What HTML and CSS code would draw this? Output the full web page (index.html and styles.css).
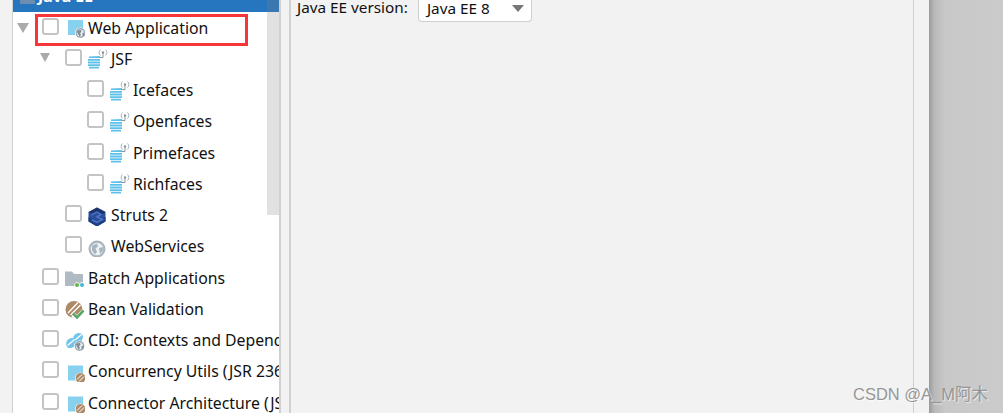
FILE: index.html
```html
<!DOCTYPE html>
<html lang="en">
<head>
  <meta charset="UTF-8" />
  <title>New Project – Java EE</title>
  <link rel="stylesheet" href="styles.css">
</head>
<body>

  <svg class="defs" width="0" height="0">
    <symbol id="i-globe" viewBox="0 0 10 10">
      <circle cx="5" cy="5" r="5" fill="#9aa7b0"/>
      <circle cx="5" cy="5" r="3.6" fill="#e8edf0"/>
      <path d="M2 2.500 5.500 2 6 4 4.500 5 5.500 7 4 8.500 2.500 6 1.500 4ZM7 5l2-.5-.5 3-1.500 1Z" fill="#7f8d97"/>
    </symbol>
    <symbol id="i-bean" viewBox="0 0 10 10">
      <circle cx="5" cy="5" r="5" fill="#ad8a68"/>
      <path d="M1.500 6.500 6.500 1.500M3.500 8.500 8.500 3.500" stroke="#fff" stroke-width="1"/>
    </symbol>
    <symbol id="i-web" viewBox="0 0 20 20">
      <rect x="3" y="2" width="15" height="15" fill="#87d0ee"/>
      <circle cx="15.500" cy="15" r="5.500" fill="#fff"/>
      <use href="#i-globe" x="10.500" y="10" width="10" height="10"/>
    </symbol>
    <symbol id="i-conc" viewBox="0 0 20 20">
      <rect x="3" y="3.500" width="15" height="15" fill="#87d0ee"/>
      <circle cx="15.500" cy="16" r="5.500" fill="#fff"/>
      <use href="#i-bean" x="10.500" y="11" width="10" height="10"/>
    </symbol>
    <symbol id="i-jsf" viewBox="0 0 20 20">
      <path d="M1 7.500 12 7v2H1ZM0 10h12v1.800H0ZM0 12.600h12v1.800H0ZM0 15.200h12V17H0ZM1 17.800h10V19.500H1Z" fill="#5ec0ea"/>
      <path d="M11.500 8.500h3.500V4" fill="none" stroke="#8a959c" stroke-width="1"/>
      <circle cx="15" cy="3.500" r="1.200" fill="#8a959c"/>
      <path d="M12.500 6.500a4 4 0 0 1 0-6M17.500 6.500a4 4 0 0 0 0-6" fill="none" stroke="#a9b3ba" stroke-width="1"/>
    </symbol>
    <symbol id="i-struts" viewBox="0 0 20 20">
      <path d="M9 1.500 17.500 6V15.500L9 20.500.5 15.500V6Z" fill="#2b4f9c"/>
      <path d="M9 1.500 17.500 6 12.500 9 9 7 5.500 9 .5 6Z" fill="#1c3570"/>
      <path d="M.5 11 9 16 17.500 11V15.500L9 20.500.5 15.500Z" fill="#1f3f85"/>
      <path d="M3.500 9 9 6 13 8.500 9 11 14.500 13.500 9 16.500 4 14" fill="none" stroke="#4d74c4" stroke-width="1.500"/>
    </symbol>
    <symbol id="i-ws" viewBox="0 0 20 20">
      <circle cx="9" cy="12" r="8.500" fill="#a9b5bd"/>
      <circle cx="9" cy="12" r="6.300" fill="#edf1f3"/>
      <path d="M4 8.500 9 6.500l1 3-2.500 2 1.500 3.500-2 2.500-3-4ZM11 11l4-1 .5 3-3.500 4Z" fill="#a9b5bd"/>
    </symbol>
    <symbol id="i-batch" viewBox="0 0 20 20">
      <path d="M0 3.500h7l2 2.500h9v12H0Z" fill="#afbac2"/>
      <circle cx="12" cy="17" r="2.700" fill="#fff"/>
      <circle cx="17" cy="17" r="2.700" fill="#fff"/>
      <circle cx="12" cy="17" r="2" fill="#62b543"/>
      <circle cx="17" cy="17" r="2" fill="#40b6e0"/>
    </symbol>
    <symbol id="i-valid" viewBox="0 0 20 20">
      <circle cx="9" cy="10.500" r="8.500" fill="#ad8a68"/>
      <path d="M3 14 13 3.500M5.500 16 15.500 6" stroke="#fff" stroke-width="1.400"/>
      <path d="M8 15.500 12 19.500 19 12" fill="none" stroke="#fff" stroke-width="5"/>
      <path d="M8 14.500 12 18.500 18.500 11.500" fill="none" stroke="#59a869" stroke-width="2.600"/>
    </symbol>
    <symbol id="i-cdi" viewBox="0 0 20 20">
      <ellipse cx="13" cy="7" rx="4.500" ry="5.500" transform="rotate(40 13 7)" fill="#72c5ea"/>
      <path d="M9.500 9.500 16.500 3.500" stroke="#fff" stroke-width="1.200"/>
      <ellipse cx="6" cy="12" rx="4.500" ry="5.500" transform="rotate(40 6 12)" fill="#72c5ea"/>
      <path d="M2.500 14.500 9.500 8.500" stroke="#fff" stroke-width="1.200"/>
      <circle cx="14.500" cy="15" r="5.500" fill="#fff"/>
      <use href="#i-globe" x="9.500" y="10" width="10" height="10"/>
    </symbol>
  </svg>

  <div class="window">
    <div class="gutter"></div>

    <div class="tree-panel">
      <div class="tree-head"><span class="tree-head-icon"></span><span>Java EE</span></div>
      <div class="thumb"></div>
      <div class="highlight"></div>

      <div class="row level-0"><span class="arrow"></span><span class="check"></span><svg class="icon"><use href="#i-web"/></svg><span>Web Application</span></div>
      <div class="row level-1"><span class="arrow small"></span><span class="check"></span><svg class="icon"><use href="#i-jsf"/></svg><span>JSF</span></div>
      <div class="row level-2"><span class="arrow none"></span><span class="check"></span><svg class="icon"><use href="#i-jsf"/></svg><span>Icefaces</span></div>
      <div class="row level-2"><span class="arrow none"></span><span class="check"></span><svg class="icon"><use href="#i-jsf"/></svg><span>Openfaces</span></div>
      <div class="row level-2"><span class="arrow none"></span><span class="check"></span><svg class="icon"><use href="#i-jsf"/></svg><span>Primefaces</span></div>
      <div class="row level-2"><span class="arrow none"></span><span class="check"></span><svg class="icon"><use href="#i-jsf"/></svg><span>Richfaces</span></div>
      <div class="row level-1"><span class="arrow none"></span><span class="check"></span><svg class="icon"><use href="#i-struts"/></svg><span>Struts 2</span></div>
      <div class="row level-1"><span class="arrow none"></span><span class="check"></span><svg class="icon"><use href="#i-ws"/></svg><span>WebServices</span></div>
      <div class="row level-0"><span class="arrow none"></span><span class="check"></span><svg class="icon"><use href="#i-batch"/></svg><span>Batch Applications</span></div>
      <div class="row level-0"><span class="arrow none"></span><span class="check"></span><svg class="icon"><use href="#i-valid"/></svg><span>Bean Validation</span></div>
      <div class="row level-0"><span class="arrow none"></span><span class="check"></span><svg class="icon"><use href="#i-cdi"/></svg><span>CDI: Contexts and Dependency Injection</span></div>
      <div class="row level-0"><span class="arrow none"></span><span class="check"></span><svg class="icon"><use href="#i-conc"/></svg><span>Concurrency Utils (JSR 236)</span></div>
      <div class="row level-0"><span class="arrow none"></span><span class="check"></span><svg class="icon"><use href="#i-conc"/></svg><span>Connector Architecture (JSR 322)</span></div>
    </div>

    <div class="splitter"></div>

    <div class="content">
      <div class="version-row">
        <span class="version-label">Java EE version:</span>
        <div class="combo"><span>Java EE 8</span><span class="combo-arrow"></span></div>
      </div>
    </div>

    <div class="side-strip"></div>
    <div class="backdrop"></div>
  </div>

  <div class="watermark">CSDN @A_M阿木</div>

</body>
</html>
```

FILE: styles.css
```css
html, body {
  margin: 0;
  height: 100%;
  overflow: hidden;
}
body {
  font-family: "Noto Sans", "Noto Sans CJK SC", sans-serif;
  font-size: 15.8px;
  color: #111;
  background: #f2f2f2;
}
.defs {
  position: absolute;
}
.window {
  display: flex;
  height: 100vh;
}
.gutter {
  width: 12px;
  border-right: 1px solid #d0d0d0;
  flex: none;
}
.tree-panel {
  position: relative;
  width: 266px;
  flex: none;
  background: #fff;
  overflow: hidden;
  white-space: nowrap;
}
.tree-head {
  height: 12px;
  background: #2675bf;
  color: #fff;
  font-weight: bold;
  display: flex;
  align-items: flex-end;
  gap: 3px;
  padding-left: 7px;
  line-height: 20px;
  overflow: hidden;
}
.tree-head > span:last-child {
  flex: none;
  margin-bottom: 6px;
}
.tree-head-icon {
  width: 15px;
  height: 4px;
  margin-bottom: 8px;
  background: #6c8fb0;
  flex: none;
}
.thumb {
  position: absolute;
  top: 0;
  right: 0;
  width: 12px;
  height: 215px;
  background: rgba(128, 128, 128, 0.24);
}
.highlight {
  position: absolute;
  left: 22px;
  top: 14px;
  width: 207px;
  height: 26px;
  border: 3px solid #f63638;
}
.row {
  height: 31.25px;
  display: flex;
  align-items: center;
}
.level-0 { padding-left: 4px; }
.level-1 { padding-left: 27px; }
.level-2 { padding-left: 49px; }
.arrow {
  width: 25px;
  flex: none;
  display: flex;
  justify-content: flex-start;
}
.arrow::before {
  content: "";
  border-style: solid;
  border-width: 10px 6px 0;
  border-color: #aaa transparent transparent;
}
.arrow.small {
  margin-top: -2px;
}
.arrow.small::before {
  border-width: 9px 5px 0;
}
.arrow.none::before {
  display: none;
}
.check {
  width: 13px;
  height: 13px;
  border: 2px solid #c4c4c4;
  border-radius: 3px;
  background: #fff;
  margin-top: -3px;
  flex: none;
}
.icon {
  width: 20px;
  height: 20px;
  margin: 1px 3px 0 6px;
  flex: none;
}
.splitter {
  width: 8px;
  flex: none;
  border-left: 2px solid #d0d0d0;
  border-right: 2px solid #d0d0d0;
}
.content {
  width: 622px;
  flex: none;
}
.version-row {
  display: flex;
  align-items: flex-start;
  gap: 10px;
  padding-left: 6px;
  line-height: 15px;
  height: 22px;
  font-size: 15.3px;
}
.combo {
  width: 104px;
  height: 21px;
  background: #fff;
  border: 1px solid #cfcfcf;
  border-top: 0;
  border-radius: 0 0 4px 4px;
  display: flex;
  justify-content: space-between;
  padding-left: 8px;
}
.combo > span:first-child {
  padding-top: 1px;
}
.combo-arrow {
  width: 0;
  height: 0;
  margin: 5px 7px 0 0;
  border-style: solid;
  border-width: 7px 6px 0;
  border-color: #777 transparent transparent;
}
.side-strip {
  width: 15px;
  flex: none;
  border-left: 1px solid #d0d0d0;
}
.backdrop {
  flex: 1;
  background: linear-gradient(to right, #999 0, #b8b8b8 5px, #c8c8c8 16px, #cbcbcb 100%);
}
.watermark {
  position: absolute;
  right: 15px;
  bottom: 8px;
  font-family: "Liberation Sans", "Noto Sans CJK SC", sans-serif;
  font-size: 16.5px;
  color: #969696;
  text-shadow: 1px 1px 1px rgba(255, 255, 255, 0.7);
}
```
